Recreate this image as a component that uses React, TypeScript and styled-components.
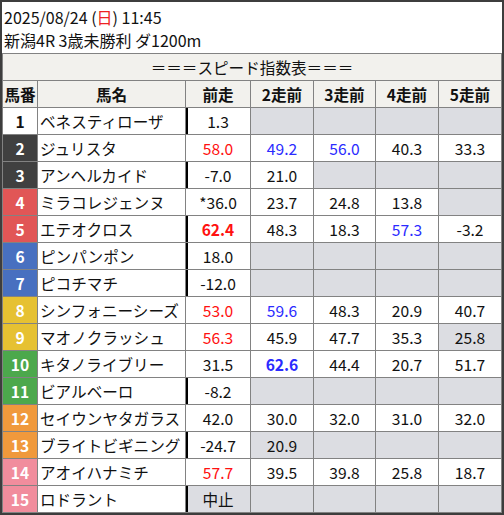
import React from "react";
import styled, { createGlobalStyle } from "styled-components";

const GlobalStyle = createGlobalStyle`
  html, body {
    margin: 0;
    padding: 0;
    background: #ffffff;
  }
  body {
    font-family: "Noto Sans CJK JP", "Noto Sans", sans-serif;
  }
`;

const Frame = styled.div`
  width: 504px;
  height: 515px;
  box-sizing: border-box;
  border: 2px solid #3d3d3d;
  background: #ffffff;
  display: flex;
  flex-direction: column;
`;

const Info = styled.div`
  height: 51px;
  box-sizing: border-box;
  padding: 4px 2px 0;
  font-size: 16px;
  line-height: 23px;
  color: #111;
`;

const Sun = styled.span`
  color: #ee2222;
`;

const Grid = styled.div`
  display: grid;
  grid-template-columns: 34px 147px 64px 62px 61px 62px 62px;
  grid-auto-rows: 26px;
  gap: 1px;
  padding: 1px;
  background: #828282;
  font-size: 15.6px;
  color: #111;
`;

const Title = styled.div`
  grid-column: 1 / -1;
  background: #f2f1ed;
  display: flex;
  align-items: center;
  justify-content: center;
`;

const Head = styled.div`
  background: #f2f1ed;
  font-weight: 700;
  display: flex;
  align-items: center;
  justify-content: center;
`;

const Waku = styled.div<{ $bg: string; $fg: string }>`
  background: ${(p) => p.$bg};
  color: ${(p) => p.$fg};
  font-weight: 700;
  display: flex;
  align-items: center;
  justify-content: center;
`;

const Name = styled.div`
  background: #ffffff;
  display: flex;
  align-items: center;
  padding-left: 2px;
  white-space: nowrap;
  overflow: hidden;
`;

const Value = styled.div<{
  $gray?: boolean;
  $tone?: "red" | "blue";
  $bold?: boolean;
  $thick?: boolean;
}>`
  background: ${(p) => (p.$gray ? "#dcdde2" : "#ffffff")};
  color: ${(p) =>
    p.$tone === "red" ? "#ff1111" : p.$tone === "blue" ? "#2b2bff" : "#111"};
  font-weight: ${(p) => (p.$bold ? 700 : 400)};
  box-shadow: ${(p) => (p.$thick ? "inset 2px 0 0 #000" : "none")};
  display: flex;
  align-items: center;
  justify-content: center;
`;

type Cell = { v: string; c?: "red" | "blue"; b?: boolean; g?: boolean } | null;

type Row = { no: number; name: string; thick: boolean; cells: Cell[] };

const waku: Record<number, [string, string]> = {
  1: ["#ffffff", "#111"],
  2: ["#404040", "#fff"],
  3: ["#404040", "#fff"],
  4: ["#e15656", "#fff"],
  5: ["#e15656", "#fff"],
  6: ["#4870c0", "#fff"],
  7: ["#4870c0", "#fff"],
  8: ["#e6c132", "#fff"],
  9: ["#e6c132", "#fff"],
  10: ["#4ca84c", "#fff"],
  11: ["#4ca84c", "#fff"],
  12: ["#f0993c", "#fff"],
  13: ["#f0993c", "#fff"],
  14: ["#f18d9d", "#fff"],
  15: ["#f18d9d", "#fff"],
};

const rows: Row[] = [
  { no: 1, name: "ベネスティローザ", thick: true, cells: [{ v: "1.3" }, null, null, null, null] },
  { no: 2, name: "ジュリスタ", thick: false, cells: [{ v: "58.0", c: "red" }, { v: "49.2", c: "blue" }, { v: "56.0", c: "blue" }, { v: "40.3" }, { v: "33.3" }] },
  { no: 3, name: "アンヘルカイド", thick: true, cells: [{ v: "-7.0" }, { v: "21.0" }, null, null, null] },
  { no: 4, name: "ミラコレジェンヌ", thick: false, cells: [{ v: "*36.0" }, { v: "23.7" }, { v: "24.8" }, { v: "13.8" }, null] },
  { no: 5, name: "エテオクロス", thick: true, cells: [{ v: "62.4", c: "red", b: true }, { v: "48.3" }, { v: "18.3" }, { v: "57.3", c: "blue" }, { v: "-3.2" }] },
  { no: 6, name: "ピンパンポン", thick: true, cells: [{ v: "18.0" }, null, null, null, null] },
  { no: 7, name: "ピコチマチ", thick: true, cells: [{ v: "-12.0" }, null, null, null, null] },
  { no: 8, name: "シンフォニーシーズ", thick: false, cells: [{ v: "53.0", c: "red" }, { v: "59.6", c: "blue" }, { v: "48.3" }, { v: "20.9" }, { v: "40.7" }] },
  { no: 9, name: "マオノクラッシュ", thick: false, cells: [{ v: "56.3", c: "red" }, { v: "45.9" }, { v: "47.7" }, { v: "35.3" }, { v: "25.8", g: true }] },
  { no: 10, name: "キタノライブリー", thick: false, cells: [{ v: "31.5" }, { v: "62.6", c: "blue", b: true }, { v: "44.4" }, { v: "20.7" }, { v: "51.7" }] },
  { no: 11, name: "ビアルベーロ", thick: true, cells: [{ v: "-8.2" }, null, null, null, null] },
  { no: 12, name: "セイウンヤタガラス", thick: false, cells: [{ v: "42.0" }, { v: "30.0" }, { v: "32.0" }, { v: "31.0" }, { v: "32.0" }] },
  { no: 13, name: "ブライトビギニング", thick: true, cells: [{ v: "-24.7" }, { v: "20.9", g: true }, null, null, null] },
  { no: 14, name: "アオイハナミチ", thick: false, cells: [{ v: "57.7", c: "red" }, { v: "39.5" }, { v: "39.8" }, { v: "25.8" }, { v: "18.7" }] },
  { no: 15, name: "ロドラント", thick: true, cells: [{ v: "中止", g: true }, null, null, null, null] },
];

const heads = ["馬番", "馬名", "前走", "2走前", "3走前", "4走前", "5走前"];

export default function App() {
  return (
    <>
      <GlobalStyle />
      <Frame>
        <Info>
          <div>
            2025/08/24 (<Sun>日</Sun>) 11:45
          </div>
          <div>新潟4R 3歳未勝利 ダ1200m</div>
        </Info>
        <Grid>
          <Title>＝＝＝スピード指数表＝＝＝</Title>
          {heads.map((h) => (
            <Head key={h}>{h}</Head>
          ))}
          {rows.map((r) => (
            <React.Fragment key={r.no}>
              <Waku $bg={waku[r.no][0]} $fg={waku[r.no][1]}>
                {r.no}
              </Waku>
              <Name>{r.name}</Name>
              {r.cells.map((c, i) => (
                <Value
                  key={i}
                  $gray={!c || c.g}
                  $tone={c?.c}
                  $bold={c?.b}
                  $thick={i === 0 && r.thick}
                >
                  {c?.v}
                </Value>
              ))}
            </React.Fragment>
          ))}
        </Grid>
      </Frame>
    </>
  );
}
